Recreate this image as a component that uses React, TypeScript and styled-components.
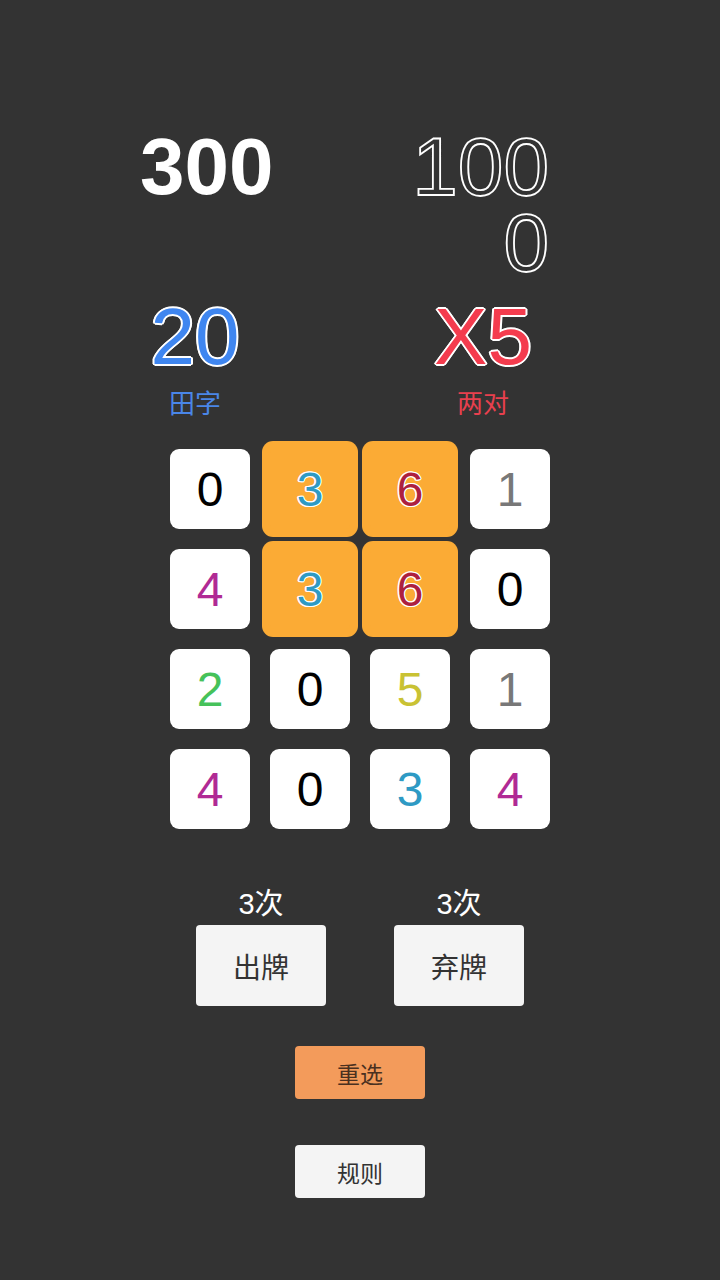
import React from 'react';
import styled, { createGlobalStyle } from 'styled-components';

const GlobalStyle = createGlobalStyle`
  html, body {
    margin: 0;
    padding: 0;
    background: #333333;
  }
  body {
    font-family: "Liberation Sans", "Noto Sans CJK SC", sans-serif;
  }
`;

// thin white outline around coloured glyphs
const whiteRim = (w: number) =>
  [
    `${w}px 0 0 #fff`,
    `-${w}px 0 0 #fff`,
    `0 ${w}px 0 #fff`,
    `0 -${w}px 0 #fff`,
    `${w * 0.7}px ${w * 0.7}px 0 #fff`,
    `-${w * 0.7}px -${w * 0.7}px 0 #fff`,
    `${w * 0.7}px -${w * 0.7}px 0 #fff`,
    `-${w * 0.7}px ${w * 0.7}px 0 #fff`,
  ].join(', ');

const Page = styled.div`
  width: 720px;
  min-height: 1280px;
  background: #333333;
  display: flex;
  flex-direction: column;
  padding-top: 129px;
  box-sizing: border-box;
`;

const StatRow = styled.div<{ $left: number; $right: number; $top?: number }>`
  display: flex;
  justify-content: space-between;
  align-items: flex-start;
  padding: 0 ${(p) => p.$right}px 0 ${(p) => p.$left}px;
  margin-top: ${(p) => p.$top ?? 0}px;
`;

const StatColumn = styled.div<{ $width: number; $align: 'left' | 'center' | 'right' }>`
  width: ${(p) => p.$width}px;
  display: flex;
  flex-direction: column;
  text-align: ${(p) => p.$align};
`;

const BigNumber = styled.div<{ $bold?: boolean }>`
  font-family: "Liberation Sans", sans-serif;
  font-size: 80px;
  line-height: 76px;
  font-weight: ${(p) => (p.$bold ? 700 : 400)};
  color: #ffffff;
`;

const OutlineNumber = styled(BigNumber)`
  font-size: 82px;
  color: #333333;
  -webkit-text-stroke: 1.8px #ffffff;
  word-break: break-all;
  margin-right: -1px;
`;

const StrokedNumber = styled(BigNumber)<{ $color: string }>`
  color: ${(p) => p.$color};
  text-shadow: ${whiteRim(2)};
`;

const ComboLabel = styled.div<{ $color: string }>`
  font-family: "Noto Sans CJK SC", sans-serif;
  font-size: 26px;
  line-height: 30px;
  margin-top: 12px;
  color: ${(p) => p.$color};
`;

const Board = styled.div`
  align-self: center;
  display: grid;
  grid-template-columns: repeat(4, 80px);
  grid-auto-rows: 80px;
  gap: 20px;
  margin-top: 32px;
`;

const Card = styled.div<{ $color: string; $selected?: boolean }>`
  display: flex;
  align-items: center;
  justify-content: center;
  background: ${(p) => (p.$selected ? '#fbab35' : '#ffffff')};
  border-radius: ${(p) => (p.$selected ? 4 : 9)}px;
  box-shadow: ${(p) => (p.$selected ? '0 0 0 8px #fbab35' : 'none')};
  font-family: "Liberation Sans", sans-serif;
  font-size: 48px;
  color: ${(p) => p.$color};
  text-shadow: ${(p) => (p.$selected ? whiteRim(1.3) : 'none')};
`;

const ActionRow = styled.div`
  align-self: center;
  display: flex;
  gap: 68px;
  margin-top: 59px;
`;

const ActionGroup = styled.div`
  display: flex;
  flex-direction: column;
  align-items: center;
`;

const CountLabel = styled.div`
  font-family: "Liberation Sans", "Noto Sans CJK SC", sans-serif;
  font-size: 29px;
  line-height: 32px;
  color: #ffffff;
  margin-bottom: 5px;
`;

const ActionButton = styled.button`
  width: 130px;
  height: 81px;
  border: none;
  border-radius: 4px;
  background: #f4f4f4;
  color: #333333;
  font-family: "Noto Sans CJK SC", sans-serif;
  font-size: 28px;
  padding: 0;
`;

const SmallButton = styled.button<{ $bg: string; $color: string; $top: number }>`
  align-self: center;
  width: 130px;
  height: 53px;
  margin-top: ${(p) => p.$top}px;
  border: none;
  border-radius: 4px;
  background: ${(p) => p.$bg};
  color: ${(p) => p.$color};
  font-family: "Noto Sans CJK SC", sans-serif;
  font-size: 23px;
  padding: 0;
`;

const digitColors: Record<number, string> = {
  0: '#000000',
  1: '#787878',
  2: '#46c25a',
  3: '#2e9ac4',
  4: '#b02a94',
  5: '#c9c234',
  6: '#ad1f3f',
};

const cards: { value: number; selected?: boolean }[] = [
  { value: 0 },
  { value: 3, selected: true },
  { value: 6, selected: true },
  { value: 1 },
  { value: 4 },
  { value: 3, selected: true },
  { value: 6, selected: true },
  { value: 0 },
  { value: 2 },
  { value: 0 },
  { value: 5 },
  { value: 1 },
  { value: 4 },
  { value: 0 },
  { value: 3 },
  { value: 4 },
];

export default function App() {
  return (
    <>
      <GlobalStyle />
      <Page>
        <StatRow $left={140} $right={172}>
          <StatColumn $width={160} $align="left">
            <BigNumber $bold>300</BigNumber>
          </StatColumn>
          <StatColumn $width={160} $align="right">
            <OutlineNumber>1000</OutlineNumber>
          </StatColumn>
        </StatRow>

        <StatRow $left={133} $right={175} $top={18}>
          <StatColumn $width={124} $align="center">
            <StrokedNumber $color="#3f86f0">20</StrokedNumber>
            <ComboLabel $color="#4a86e8">田字</ComboLabel>
          </StatColumn>
          <StatColumn $width={124} $align="center">
            <StrokedNumber $color="#f43c4e">X5</StrokedNumber>
            <ComboLabel $color="#e8404e">两对</ComboLabel>
          </StatColumn>
        </StatRow>

        <Board>
          {cards.map((c, i) => (
            <Card key={i} $color={digitColors[c.value]} $selected={c.selected}>
              {c.value}
            </Card>
          ))}
        </Board>

        <ActionRow>
          <ActionGroup>
            <CountLabel>3次</CountLabel>
            <ActionButton>出牌</ActionButton>
          </ActionGroup>
          <ActionGroup>
            <CountLabel>3次</CountLabel>
            <ActionButton>弃牌</ActionButton>
          </ActionGroup>
        </ActionRow>

        <SmallButton $bg="#f39b5b" $color="#4a3020" $top={40}>
          重选
        </SmallButton>
        <SmallButton $bg="#f4f4f4" $color="#333333" $top={46}>
          规则
        </SmallButton>
      </Page>
    </>
  );
}
